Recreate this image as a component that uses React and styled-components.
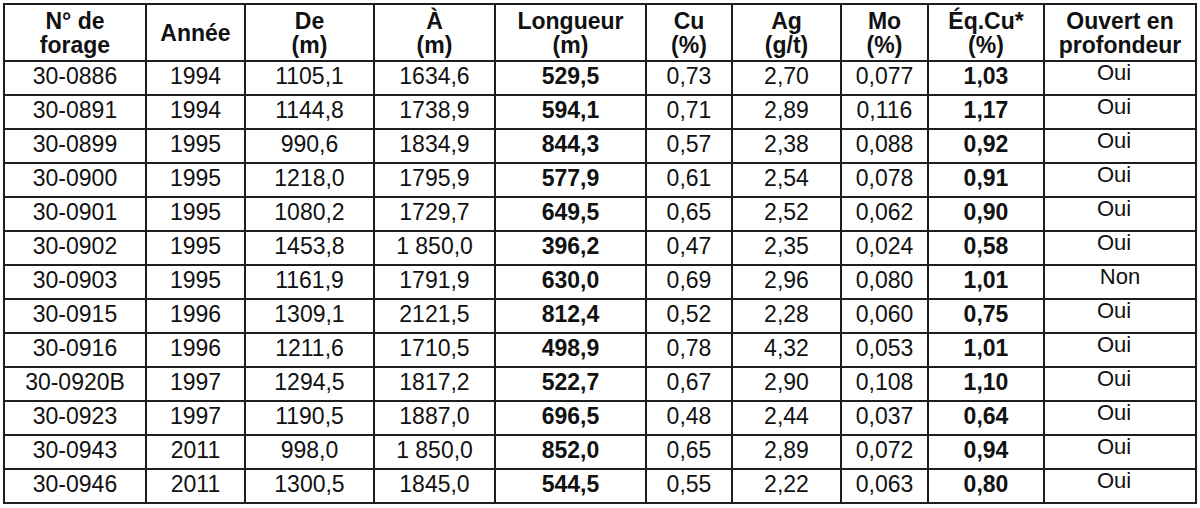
import React from 'react';
import styled, { createGlobalStyle } from 'styled-components';

const GlobalStyle = createGlobalStyle`
  html, body {
    margin: 0;
    padding: 0;
    background: #ffffff;
  }
  body {
    font-family: "Liberation Sans", Arial, sans-serif;
    color: #111111;
  }
`;

const Page = styled.div`
  padding: 3px 0 0 3px;
  width: 1200px;
  height: 508px;
  box-sizing: border-box;
  overflow: hidden;
`;

const Table = styled.table`
  border-collapse: collapse;
  table-layout: fixed;
  width: 1193px;
  border: 2px solid #1e1e1e;
`;

const HeadCell = styled.th`
  height: 55px;
  padding: 0 2px;
  border: 2px solid #1e1e1e;
  font-size: 23px;
  line-height: 24px;
  font-weight: bold;
  text-align: center;
  vertical-align: middle;
`;

const Cell = styled.td`
  height: 32px;
  box-sizing: border-box;
  padding: 2px 2px 6px;
  border: 2px solid #1e1e1e;
  font-size: 23px;
  line-height: 24px;
  font-weight: ${(p) => (p.$bold ? 'bold' : 'normal')};
  text-align: center;
  vertical-align: top;
  white-space: nowrap;
`;

const FlagCell = styled(Cell)`
  padding: 1px ${(p) => (p.$yes ? '14px' : '2px')} 11px 2px;
  font-size: 22px;
  line-height: 20px;
`;

const widths = [142, 99, 129, 121, 151, 86, 109, 87, 116, 152];

const headers = [
  ['N° de', 'forage'],
  ['Année'],
  ['De', '(m)'],
  ['À', '(m)'],
  ['Longueur', '(m)'],
  ['Cu', '(%)'],
  ['Ag', '(g/t)'],
  ['Mo', '(%)'],
  ['Éq.Cu*', '(%)'],
  ['Ouvert en', 'profondeur'],
];

const rows = [
  ['30-0886', '1994', '1105,1', '1634,6', '529,5', '0,73', '2,70', '0,077', '1,03', 'Oui'],
  ['30-0891', '1994', '1144,8', '1738,9', '594,1', '0,71', '2,89', '0,116', '1,17', 'Oui'],
  ['30-0899', '1995', '990,6', '1834,9', '844,3', '0,57', '2,38', '0,088', '0,92', 'Oui'],
  ['30-0900', '1995', '1218,0', '1795,9', '577,9', '0,61', '2,54', '0,078', '0,91', 'Oui'],
  ['30-0901', '1995', '1080,2', '1729,7', '649,5', '0,65', '2,52', '0,062', '0,90', 'Oui'],
  ['30-0902', '1995', '1453,8', '1 850,0', '396,2', '0,47', '2,35', '0,024', '0,58', 'Oui'],
  ['30-0903', '1995', '1161,9', '1791,9', '630,0', '0,69', '2,96', '0,080', '1,01', 'Non'],
  ['30-0915', '1996', '1309,1', '2121,5', '812,4', '0,52', '2,28', '0,060', '0,75', 'Oui'],
  ['30-0916', '1996', '1211,6', '1710,5', '498,9', '0,78', '4,32', '0,053', '1,01', 'Oui'],
  ['30-0920B', '1997', '1294,5', '1817,2', '522,7', '0,67', '2,90', '0,108', '1,10', 'Oui'],
  ['30-0923', '1997', '1190,5', '1887,0', '696,5', '0,48', '2,44', '0,037', '0,64', 'Oui'],
  ['30-0943', '2011', '998,0', '1 850,0', '852,0', '0,65', '2,89', '0,072', '0,94', 'Oui'],
  ['30-0946', '2011', '1300,5', '1845,0', '544,5', '0,55', '2,22', '0,063', '0,80', 'Oui'],
];

const boldCols = [4, 8];

export default function App() {
  return (
    <>
      <GlobalStyle />
      <Page>
        <Table>
          <colgroup>
            {widths.map((w, i) => (
              <col key={i} style={{ width: w }} />
            ))}
          </colgroup>
          <thead>
            <tr>
              {headers.map((h, i) => (
                <HeadCell key={i}>
                  {h.map((line, j) => (
                    <React.Fragment key={j}>
                      {j > 0 && <br />}
                      {line}
                    </React.Fragment>
                  ))}
                </HeadCell>
              ))}
            </tr>
          </thead>
          <tbody>
            {rows.map((r) => (
              <tr key={r[0]}>
                {r.slice(0, 9).map((v, i) => (
                  <Cell key={i} $bold={boldCols.includes(i)}>
                    {v}
                  </Cell>
                ))}
                <FlagCell $yes={r[9] === 'Oui'}>{r[9]}</FlagCell>
              </tr>
            ))}
          </tbody>
        </Table>
      </Page>
    </>
  );
}
